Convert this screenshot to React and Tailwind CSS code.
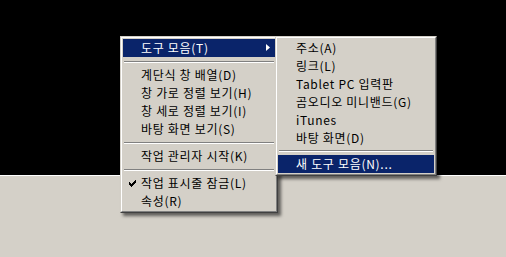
import React from 'react';

const mainItems = [
  {label: '도구 모음(T)', active: true, sub: true},
  {sep: true},
  {label: '계단식 창 배열(D)'},
  {label: '창 가로 정렬 보기(H)'},
  {label: '창 세로 정렬 보기(I)'},
  {label: '바탕 화면 보기(S)'},
  {sep: true},
  {label: '작업 관리자 시작(K)'},
  {sep: true},
  {label: '작업 표시줄 잠금(L)', checked: true},
  {label: '속성(R)'}
];

const toolbarItems = [
  {label: '주소(A)'},
  {label: '링크(L)'},
  {label: 'Tablet PC 입력판'},
  {label: '곰오디오 미니밴드(G)'},
  {label: 'iTunes'},
  {label: '바탕 화면(D)'},
  {sep: true, short: true},
  {label: '새 도구 모음(N)...', active: true}
];

function Separator({short}) {
  return (
    <div className={`flex flex-col justify-center px-[1px] ${short ? 'h-[8px]' : 'h-[9px]'}`}>
      <div className="h-px bg-[#808080]" />
      <div className="h-px bg-white" />
    </div>
  );
}

function MenuItem({item}) {
  return (
    <div
      className={`relative flex h-[18px] items-center pl-[18px] pr-[20px] ${
        item.active ? 'bg-[#0a246a] text-white' : 'text-black'
      }`}
    >
      {item.checked ? (
        <svg className="absolute left-[6px] top-[6px]" width="7" height="7" viewBox="0 0 7 7">
          <path d="M0 2h1v1h1v1h1v-1h1v-1h1v-1h1v-1h1v3h-1v1h-1v1h-1v1h-1v1h-1v-1h-1v-1h-1z" fill="#000" />
        </svg>
      ) : null}
      <span className="whitespace-nowrap tracking-[0.7px]">{item.label}</span>
      {item.sub ? (
        <svg className="absolute right-[5px] top-[5px]" width="4" height="7" viewBox="0 0 4 7">
          <path d="M0 0L4 3.5L0 7z" fill={item.active ? '#fff' : '#000'} />
        </svg>
      ) : null}
    </div>
  );
}

function Menu({items, className}) {
  return (
    <div
      className={`absolute border border-b-[#404040] border-l-[#d4d0c8] border-r-[#404040] border-t-[#d4d0c8] bg-[#d4d0c8] shadow-[3px_3px_3px_rgba(0,0,0,0.55)] ${className}`}
    >
      <div className="border border-b-[#808080] border-l-white border-r-[#808080] border-t-white p-px">
        {items.map((item, i) => (item.sep ? <Separator key={i} short={item.short} /> : <MenuItem key={i} item={item} />))}
      </div>
    </div>
  );
}

export default function App() {
  return (
    <div
      className="relative h-[257px] w-[506px] overflow-hidden text-[12px] leading-none"
      style={{fontFamily: '"Noto Sans CJK KR", "Liberation Sans", sans-serif'}}
    >
      <div className="h-[175px] bg-black" />
      <div className="h-px bg-white" />
      <div className="h-[81px] bg-[#d4d0c8]" />

      <Menu items={mainItems} className="left-[120px] top-[36px] w-[158px]" />
      <Menu items={toolbarItems} className="left-[275px] top-[36px] w-[162px]" />
    </div>
  );
}
